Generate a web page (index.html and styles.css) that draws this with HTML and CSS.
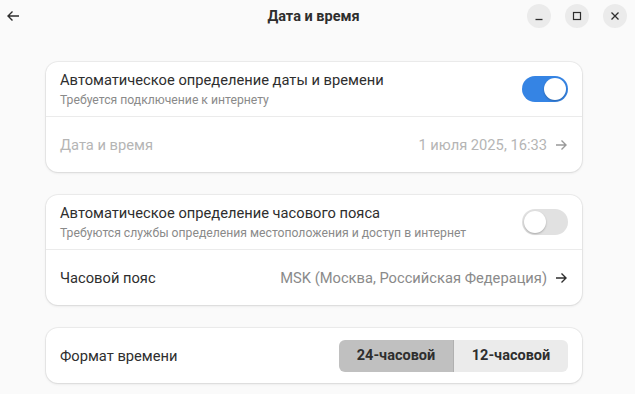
FILE: index.html
```html
<!DOCTYPE html>
<html lang="ru">
<head>
<meta charset="utf-8">
<title>Дата и время</title>
<link rel="stylesheet" href="styles.css">
</head>
<body>
<div class="window">
  <header class="headerbar">
    <button class="back" aria-label="Назад">
      <svg width="14" height="14" viewBox="0 0 14 14"><path d="M13 7H2M6.5 2.5L2 7l4.5 4.5" fill="none" stroke="#2e2e2e" stroke-width="1.4"/></svg>
    </button>
    <div class="title">Дата и время</div>
    <div class="controls">
      <span class="wbtn"><svg width="10" height="10" viewBox="0 0 10 10"><path d="M1.5 8.5h7" stroke="#2e2e2e" stroke-width="1.3"/></svg></span>
      <span class="wbtn"><svg width="10" height="10" viewBox="0 0 10 10"><rect x="1.5" y="1.5" width="7" height="7" fill="none" stroke="#2e2e2e" stroke-width="1.2"/></svg></span>
      <span class="wbtn"><svg width="10" height="10" viewBox="0 0 10 10"><path d="M1.5 1.5l7 7M8.5 1.5l-7 7" stroke="#2e2e2e" stroke-width="1.3"/></svg></span>
    </div>
  </header>
  <main class="content">
    <section class="card">
      <div class="row row-sep">
        <div class="text">
          <div class="label">Автоматическое определение даты и времени</div>
          <div class="sub">Требуется подключение к интернету</div>
        </div>
        <span class="switch on"><span class="knob"></span></span>
      </div>
      <div class="row disabled">
        <div class="label">Дата и время</div>
        <div class="value">1 июля 2025, 16:33
          <svg class="arrow" width="13" height="12" viewBox="0 0 13 12"><path d="M1 6h10M6.5 1.5L11 6l-4.5 4.5" fill="none" stroke="currentColor" stroke-width="1.4"/></svg>
        </div>
      </div>
    </section>
    <section class="card">
      <div class="row row-sep">
        <div class="text">
          <div class="label">Автоматическое определение часового пояса</div>
          <div class="sub">Требуются службы определения местоположения и доступ в интернет</div>
        </div>
        <span class="switch"><span class="knob"></span></span>
      </div>
      <div class="row">
        <div class="label">Часовой пояс</div>
        <div class="value">MSK (Москва, Российская Федерация)
          <svg class="arrow dark" width="13" height="12" viewBox="0 0 13 12"><path d="M1 6h10M6.5 1.5L11 6l-4.5 4.5" fill="none" stroke="currentColor" stroke-width="1.4"/></svg>
        </div>
      </div>
    </section>
    <section class="card">
      <div class="row">
        <div class="label">Формат времени</div>
        <div class="segmented">
          <span class="seg active">24-часовой</span>
          <span class="seg">12-часовой</span>
        </div>
      </div>
    </section>
  </main>
</div>
</body>
</html>
```
FILE: styles.css
```css
html, body {
  margin: 0;
  padding: 0;
  background: #fafafa;
  font-family: Roboto, "Noto Sans", sans-serif;
  color: #2e2e2e;
}
.window {
  width: 635px;
  height: 394px;
  overflow: hidden;
}
.headerbar {
  height: 32px;
  display: grid;
  grid-template-columns: 1fr auto 1fr;
  align-items: center;
}
.back {
  justify-self: start;
  border: 0;
  background: none;
  padding: 0;
  margin-left: 6px;
  width: 14px;
  height: 14px;
  display: flex;
}
.title {
  text-align: center;
  font-weight: 700;
  font-size: 14.5px;
  margin-right: 8px;
}
.controls {
  justify-self: end;
  display: flex;
  gap: 14px;
  margin-right: 8px;
}
.wbtn {
  width: 24px;
  height: 24px;
  border-radius: 50%;
  background: #ebebeb;
  display: flex;
  align-items: center;
  justify-content: center;
}
.content {
  padding: 30px 0 0 46px;
  display: flex;
  flex-direction: column;
  gap: 23px;
}
.card {
  width: 536px;
  box-sizing: border-box;
  background: #fff;
  border-radius: 12px;
  box-shadow: 0 0 0 1px rgba(0,0,0,0.05), 0 1px 3px rgba(0,0,0,0.1);
}
.row {
  height: 55px;
  box-sizing: border-box;
  padding: 0 14px;
  display: flex;
  align-items: center;
  justify-content: space-between;
}
.row-sep {
  border-bottom: 1px solid #ebebeb;
}
.text {
  display: flex;
  flex-direction: column;
  gap: 2px;
}
.label {
  font-size: 14.7px;
  line-height: 20px;
  color: #2e2e2e;
}
.sub {
  font-size: 12.2px;
  line-height: 16px;
  color: #8a8a8a;
}
.value {
  display: flex;
  align-items: center;
  gap: 8px;
  font-size: 14.7px;
  color: #8a8a8a;
}
.arrow { color: #8a8a8a; }
.arrow.dark { color: #2e2e2e; }
.disabled .label,
.disabled .value { color: #b5b5b5; }
.disabled .arrow { color: #999; }
.switch {
  width: 46px;
  height: 26px;
  border-radius: 13px;
  background: #e1e1e1;
  display: flex;
  align-items: center;
  padding: 2px;
  box-sizing: border-box;
}
.switch.on {
  background: #3584e4;
  justify-content: flex-end;
}
.knob {
  width: 22px;
  height: 22px;
  border-radius: 50%;
  background: #fff;
  box-shadow: 0 1px 2px rgba(0,0,0,0.25);
}
.segmented {
  display: flex;
  border-radius: 6px;
  overflow: hidden;
  height: 32px;
}
.seg {
  width: 114px;
  display: flex;
  align-items: center;
  justify-content: center;
  font-size: 14.5px;
  font-weight: 700;
  background: #ebebeb;
  color: #2e2e2e;
}
.seg.active {
  background: #c0c0c0;
  border-right: 1px solid #b0b0b0;
}
```
